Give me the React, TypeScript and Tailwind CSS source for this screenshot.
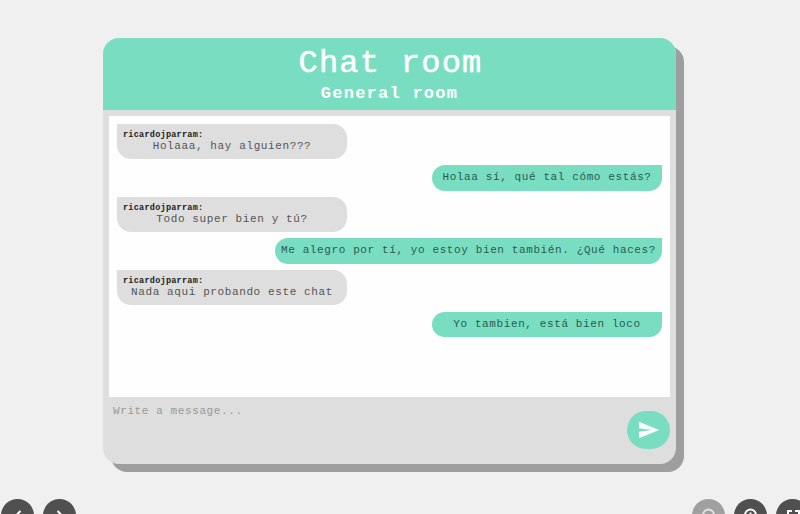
type Message = { author?: string; text: string };

const messages: Message[] = [
  { author: 'ricardojparram:', text: 'Holaaa, hay alguien???' },
  { text: 'Holaa sí, qué tal cómo estás?' },
  { author: 'ricardojparram:', text: 'Todo super bien y tú?' },
  { text: 'Me alegro por tí, yo estoy bien también. ¿Qué haces?' },
  { author: 'ricardojparram:', text: 'Nada aqui probando este chat' },
  { text: 'Yo tambien, está bien loco' },
];

function Bubble({ author, text }: Message) {
  if (author) {
    return (
      <div className="h-[35.3px] w-[230px] shrink-0 self-start rounded-[14px] rounded-tl-none bg-[#dedede] px-1.5 pt-[6px]">
        <div className="h-[10px] text-[8.5px] leading-[11px] font-bold tracking-[0.26px] text-[#222]">{author}</div>
        <div className="text-center text-[11px] leading-[12px] tracking-[0.61px] whitespace-nowrap text-[#555]">{text}</div>
      </div>
    );
  }
  return (
    <div className="h-[25.4px] min-w-[230px] shrink-0 self-end rounded-[13px] rounded-tr-none bg-[#79dec1] px-1.5 text-center text-[11px] leading-[25px] tracking-[0.61px] whitespace-nowrap text-[#2c5950]">
      {text}
    </div>
  );
}

const control = 'flex size-[33px] items-center justify-center rounded-full text-white';

export default function App() {
  return (
    <div className="flex h-[514px] w-[800px] flex-col overflow-hidden bg-[#f0f0f0] pt-[38px] font-['Liberation_Mono',monospace]">
      <main className="ml-[103px] flex h-[426.3px] w-[573px] shrink-0 flex-col overflow-hidden rounded-[16px] bg-[#dedede] shadow-[8px_8px_0_#9e9e9e]">
        <header className="h-[72px] shrink-0 bg-[#79dec1] pt-[7px] text-center text-white">
          <h1 className="h-[39px] pl-[2px] text-[32px] leading-[38px] tracking-[1.25px] [-webkit-text-stroke:0.5px_white]">Chat room</h1>
          <h2 className="h-[20px] text-[17px] leading-[20px] font-bold tracking-[1.25px]">General room</h2>
        </header>
        <section className="mx-1.5 mt-1.5 flex h-[280.7px] shrink-0 flex-col gap-[6.3px] bg-[#fefefe] px-2 pt-[7.6px]">
          {messages.map((m) => (
            <Bubble key={m.text} {...m} />
          ))}
        </section>
        <form className="flex flex-1 justify-between pr-[6px] pl-[10px]">
          <textarea
            className="h-[60px] w-[440px] resize-none bg-transparent pt-[6px] text-[11px] leading-[16px] tracking-[0.6px] outline-none placeholder:text-[#999] placeholder:opacity-100"
            placeholder="Write a message..."
          />
          <button type="button" aria-label="Send" className="mt-[14px] flex h-[38px] w-[43px] items-center justify-center rounded-[19px] bg-[#79dec1]">
            <svg className="h-[18px] w-[20px]" viewBox="0 0 20 18" fill="white">
              <path d="M0 0.7 20 9 0 17.3V10.8L13 9 0 7.2Z" />
            </svg>
          </button>
        </form>
      </main>
      <nav className="mt-[35px] flex shrink-0 justify-between pl-[1px]">
        <div className="flex gap-[9px]">
          <button aria-label="Previous" className={`${control} bg-[#505050]`}>
            <svg className="size-[18px]" viewBox="0 0 18 18" fill="none" stroke="white" strokeWidth="2">
              <path d="m11.5 4-5 5 5 5" />
            </svg>
          </button>
          <button aria-label="Next" className={`${control} bg-[#505050]`}>
            <svg className="size-[18px]" viewBox="0 0 18 18" fill="none" stroke="white" strokeWidth="2">
              <path d="m6.5 4 5 5-5 5" />
            </svg>
          </button>
        </div>
        <div className="-mr-[9px] flex gap-[9px]">
          <button aria-label="Zoom out" className={`${control} bg-[#a0a0a0]`}>
            <svg className="size-[18px]" viewBox="0 0 18 18" fill="none" stroke="#e2e2e2" strokeWidth="2">
              <circle cx="8.5" cy="8" r="5.5" /><path d="m12.5 12 4 4M6 8h5" />
            </svg>
          </button>
          <button aria-label="Zoom in" className={`${control} bg-[#505050]`}>
            <svg className="size-[18px]" viewBox="0 0 18 18" fill="none" stroke="white" strokeWidth="2">
              <circle cx="8.5" cy="8" r="5.5" /><path d="m12.5 12 4 4M6 8h5M8.5 5.5v5" />
            </svg>
          </button>
          <button aria-label="Full screen" className={`${control} bg-[#505050]`}>
            <svg className="size-[18px]" viewBox="0 0 18 18" fill="none" stroke="white" strokeWidth="2">
              <path d="M4 8V4h4M11 4h4v4M4 11v4h4M11 15h4v-4" />
            </svg>
          </button>
        </div>
      </nav>
    </div>
  );
}
